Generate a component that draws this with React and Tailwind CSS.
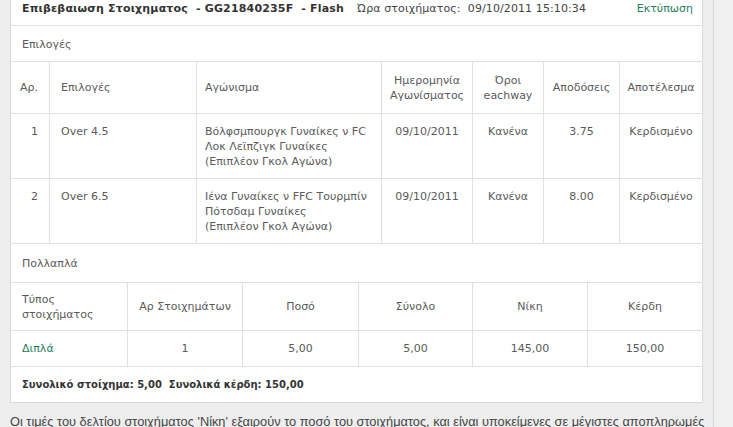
import React from 'react';

const legs = [
  { no: 1, pick: 'Over 4.5', event: ['Βόλφσμπουργκ Γυναίκες ν FC', 'Λοκ Λεϊπζιγκ Γυναίκες', '(Επιπλέον Γκολ Αγώνα)'], date: '09/10/2011', ew: 'Κανένα', odds: '3.75', result: 'Κερδισμένο' },
  { no: 2, pick: 'Over 6.5', event: ['Ιένα Γυναίκες ν FFC Τουρμπίν', 'Πότσδαμ Γυναίκες', '(Επιπλέον Γκολ Αγώνα)'], date: '09/10/2011', ew: 'Κανένα', odds: '8.00', result: 'Κερδισμένο' },
];

const cell = 'border-r border-[#e0e0e0]';
const multiCols = 'grid grid-cols-[117px_115px_116px_114px_115px_1fr] border-b border-[#e0e0e0]';

export default function App() {
  return (
    <div className="flex min-h-[427px] bg-[#eeeeee] text-[11px] leading-[15px] text-[#5a5a5a]" style={{ fontFamily: '"DejaVu Sans", Verdana, sans-serif' }}>
      <div className="w-[703px] shrink-0 pl-[10px]">
        <div className="border-x border-b border-[#d9d9d9] bg-white">
          {/* Title */}
          <div className="flex h-[26px] items-start border-b border-[#e0e0e0] px-[11px] pt-[1px]">
            <span className="whitespace-pre font-bold tracking-[0.17px] text-[#333]">Επιβεβαιωση Στοιχηματος  - GG21840235F  - Flash</span>
            <span className="ml-[13px] whitespace-pre tracking-[0.1px] text-[#444]">Ώρα στοιχήματος:  09/10/2011 15:10:34</span>
            <span className="ml-auto mr-[-2px] text-[#26805a]">Εκτύπωση</span>
          </div>

          {/* Selections */}
          <div className="border-b border-[#e0e0e0] px-[11px] pt-[11px] pb-[9px]">Επιλογές</div>
          <div className="flex h-[52px] border-b border-[#e0e0e0]">
            <div className={`${cell} flex w-[39px] items-center justify-end pr-[11px]`}>Αρ.</div>
            <div className={`${cell} flex w-[147px] items-center pl-[11px]`}>Επιλογές</div>
            <div className={`${cell} flex w-[185px] items-center pl-[8px]`}>Αγώνισμα</div>
            <div className={`${cell} flex w-[91px] items-center justify-center text-center`}>Ημερομηνία<br />Αγωνίσματος</div>
            <div className={`${cell} flex w-[71px] items-center justify-center text-center`}>Όροι<br />eachway</div>
            <div className={`${cell} flex w-[76px] items-center justify-center`}>Αποδόσεις</div>
            <div className="flex flex-1 items-center justify-center">Αποτέλεσμα</div>
          </div>
          {legs.map((l) => (
            <div key={l.no} className="flex h-[65px] border-b border-[#e0e0e0]">
              <div className={`${cell} w-[39px] pt-[10px] pr-[11px] text-right`}>{l.no}</div>
              <div className={`${cell} w-[147px] pt-[10px] pl-[11px]`}>{l.pick}</div>
              <div className={`${cell} w-[185px] pt-[10px] pl-[8px]`}>
                {l.event.map((t) => (<div key={t}>{t}</div>))}
              </div>
              <div className={`${cell} w-[91px] pt-[10px] text-center`}>{l.date}</div>
              <div className={`${cell} w-[71px] pt-[10px] text-center`}>{l.ew}</div>
              <div className={`${cell} w-[76px] pt-[10px] text-center`}>{l.odds}</div>
              <div className="flex-1 pt-[10px] text-center">{l.result}</div>
            </div>
          ))}

          {/* Multiples */}
          <div className="border-b border-[#e0e0e0] px-[11px] pt-[12px] pb-[11px]">Πολλαπλά</div>
          <div className={`${multiCols} h-[48px]`}>
            <div className={`${cell} flex items-center pl-[11px]`}>Τύπος<br />στοιχήματος</div>
            <div className={`${cell} flex items-center justify-center`}>Αρ Στοιχημάτων</div>
            <div className={`${cell} flex items-center justify-center`}>Ποσό</div>
            <div className={`${cell} flex items-center justify-center`}>Σύνολο</div>
            <div className={`${cell} flex items-center justify-center`}>Νίκη</div>
            <div className="flex items-center justify-center">Κέρδη</div>
          </div>
          <div className={`${multiCols} h-[36px]`}>
            <div className={`${cell} flex items-center pl-[11px] text-[#26805a]`}>Διπλά</div>
            <div className={`${cell} flex items-center justify-center`}>1</div>
            <div className={`${cell} flex items-center justify-center`}>5,00</div>
            <div className={`${cell} flex items-center justify-center`}>5,00</div>
            <div className={`${cell} flex items-center justify-center`}>145,00</div>
            <div className="flex items-center justify-center">150,00</div>
          </div>
          <div className="flex h-[35px] items-center whitespace-pre px-[11px] text-[10px] font-bold text-[#333]">Συνολικό στοίχημα: 5,00  Συνολικά κέρδη: 150,00</div>
        </div>
        <p className="mt-[11px] whitespace-nowrap text-[12.8px] leading-[16px] text-[#444]" style={{ fontFamily: '"Liberation Sans", Arial, sans-serif' }}>
          Οι τιμές του δελτίου στοιχήματος 'Νίκη' εξαιρούν το ποσό του στοιχήματος, και είναι υποκείμενες σε μέγιστες αποπληρωμές
        </p>
      </div>
      <div className="ml-[10px] flex-1 border-l border-[#d4d4d4] bg-[#f0f0f0]" />
    </div>
  );
}
